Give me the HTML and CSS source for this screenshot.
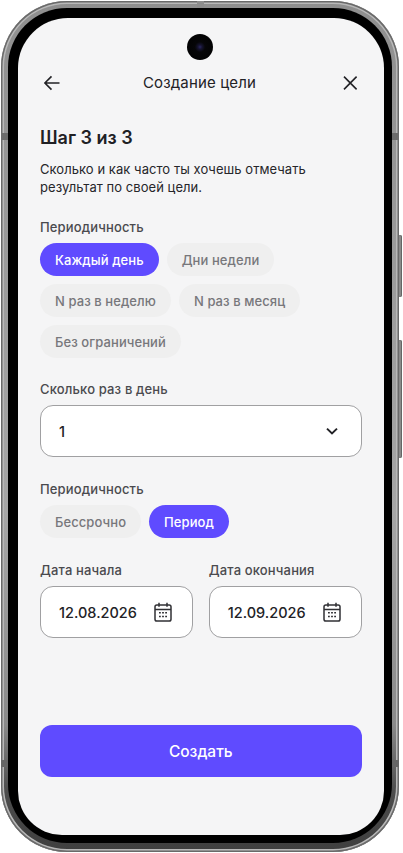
FILE: index.html
```html
<!DOCTYPE html>
<html lang="ru">
<head>
<meta charset="utf-8">
<title>Создание цели</title>
<link rel="stylesheet" href="styles.css">
</head>
<body>
<div class="phone">
  <span class="side-btn side-btn-a"></span>
  <span class="side-btn side-btn-b"></span>
  <span class="band band-top"></span>
  <span class="band band-l1"></span>
  <span class="band band-r1"></span>
  <span class="band band-l2"></span>
  <span class="band band-r2"></span>
  <div class="bezel">
    <div class="screen">
      <span class="camera"></span>
      <header class="topbar">
        <svg class="icon" viewBox="0 0 20 20" aria-hidden="true"><path d="M17.5 10H3M9.5 3.4 2.9 10l6.6 6.6"/></svg>
        <h1 class="title">Создание цели</h1>
        <svg class="icon" viewBox="0 0 20 20" aria-hidden="true"><path d="M4 3.6l12.6 12.8M16.6 3.6 4 16.4"/></svg>
      </header>
      <main class="content">
        <h2 class="step">Шаг 3 из 3</h2>
        <p class="lead">Сколько и как часто ты хочешь отмечать результат по своей цели.</p>

        <div class="label label-first">Периодичность</div>
        <div class="chips">
          <span class="chip chip-on">Каждый день</span>
          <span class="chip">Дни недели</span>
          <span class="chip">N раз в неделю</span>
          <span class="chip">N раз в месяц</span>
          <span class="chip">Без ограничений</span>
        </div>

        <div class="label label-count">Сколько раз в день</div>
        <div class="field field-select">
          <span>1</span>
          <svg class="chev" viewBox="0 0 14 10" aria-hidden="true"><path d="M2 2.6 7 7.4l5-4.8"/></svg>
        </div>

        <div class="label label-period">Периодичность</div>
        <div class="chips">
          <span class="chip">Бессрочно</span>
          <span class="chip chip-on">Период</span>
        </div>

        <div class="dates">
          <div class="date-col">
            <div class="label label-date">Дата начала</div>
            <div class="field field-date">
              <span>12.08.2026</span>
              <svg class="cal" viewBox="0 0 18 20" aria-hidden="true"><rect x="1" y="3" width="16" height="16" rx="1.8"/><path d="M1 7.4h16M5 .8v4M13 .8v4"/><path class="dots" d="M5 10.8h1.8M8.1 10.8h1.8M11.2 10.8H13M5 14.6h1.8M8.1 14.6h1.8M11.2 14.6H13"/></svg>
            </div>
          </div>
          <div class="date-col">
            <div class="label label-date">Дата окончания</div>
            <div class="field field-date">
              <span>12.09.2026</span>
              <svg class="cal" viewBox="0 0 18 20" aria-hidden="true"><rect x="1" y="3" width="16" height="16" rx="1.8"/><path d="M1 7.4h16M5 .8v4M13 .8v4"/><path class="dots" d="M5 10.8h1.8M8.1 10.8h1.8M11.2 10.8H13M5 14.6h1.8M8.1 14.6h1.8M11.2 14.6H13"/></svg>
            </div>
          </div>
        </div>

        <button class="create" type="button">Создать</button>
      </main>
    </div>
  </div>
</div>
</body>
</html>
```
FILE: styles.css
```css
* { box-sizing: border-box; }
html, body { margin: 0; padding: 0; background: #fff; }
body { width: 403px; height: 853px; overflow: hidden; font-family: Inter, "Noto Sans", sans-serif; color: #222226; }

.phone {
  position: relative;
  width: 398px;
  height: 851px;
  margin: 1px 0 0 1px;
  padding: 7px 7px 9px 7px;
  border-radius: 66px;
  background: linear-gradient(180deg, #8f8f8f 0%, #a6a6a6 60%, #8a8a8a 85%, #4d4d4d 93%, #3f3f3f 100%);
  box-shadow: inset 0 0 0 1.5px #6a6a6a, inset 0 0 0 3px #b8b8b8;
}
.bezel {
  height: 100%;
  padding: 10px 8px 8px 10px;
  border-radius: 59px;
  background: #000;
}
.screen {
  position: relative;
  height: 100%;
  border-radius: 50px 50px 44px 44px;
  background: #f5f5f6;
  overflow: hidden;
}
.side-btn { position: absolute; right: -3px; width: 3px; background: #8a8a8a; border-radius: 0 2px 2px 0; box-shadow: inset -1px 0 0 #666; }
.side-btn-a { top: 234px; height: 62px; }
.side-btn-b { top: 339px; height: 118px; }
.band { position: absolute; background: #6c6c6c; }
.band-top { top: 0; left: 196px; width: 7px; height: 7px; background: #8d8d8d; }
.band-l1, .band-r1 { top: 132px; width: 7px; height: 7px; }
.band-l2, .band-r2 { top: 759px; width: 7px; height: 7px; background: #666; }
.band-l1, .band-l2 { left: 0; }
.band-r1, .band-r2 { right: 0; }

.camera {
  position: absolute;
  top: 16px;
  left: 169px;
  width: 26px;
  height: 26px;
  border-radius: 50%;
  background: radial-gradient(circle at 50% 50%, #2a2660 0, #15132e 12%, #060608 28%, #000 100%);
}
.topbar {
  display: flex;
  align-items: center;
  justify-content: space-between;
  padding: 55px 24px 0 24px;
}
.icon { width: 20px; height: 20px; fill: none; stroke: #222226; stroke-width: 1.6; }
.title { margin: 0 3px 0 0; font-size: 15px; line-height: 20px; font-weight: 400; letter-spacing: .15px; }

.content { padding: 0 22.5px 0 22px; }
.step { margin: 33px 0 0; font-size: 18px; line-height: 24px; font-weight: 600; color: #202024; }
.lead { margin: 10px 0 0; font-size: 13px; line-height: 18px; font-weight: 400; color: #26262a; letter-spacing: .05px; }
.label { font-size: 13px; line-height: 18px; font-weight: 500; color: #4a4a4e; letter-spacing: .15px; }
.label-first { margin-top: 22px; }
.label-count { margin-top: 22px; }
.label-period { margin-top: 23px; }
.label-date { margin-bottom: 7px; }

.chips { display: flex; flex-wrap: wrap; gap: 8px; margin-top: 7px; }
.chip {
  height: 33px;
  padding: 0 15px;
  border-radius: 16.5px;
  background: #efefef;
  color: #77777b;
  font-size: 13px;
  line-height: 34px;
  font-weight: 500;
  letter-spacing: .08px;
}
.chip-on { background: #5f4bff; color: #fff; }

.field {
  display: flex;
  align-items: center;
  justify-content: space-between;
  height: 52px;
  border: 1px solid #a0a0a2;
  border-radius: 13px;
  background: #fff;
  color: #222226;
  font-size: 14.5px;
  font-weight: 500;
}
.field-select { margin-top: 7px; padding: 0 22px 0 18px; }
.chev { width: 14px; height: 10px; fill: none; stroke: #222226; stroke-width: 2; }
.field-date { padding: 0 20px 0 18px; }
.cal { width: 18px; height: 20px; flex: none; fill: none; stroke: #303034; stroke-width: 1.5; }
.cal .dots { stroke-width: 1.5; }

.dates { display: flex; gap: 16px; margin-top: 23px; }
.date-col { flex: 1 1 0; min-width: 0; }

.create {
  display: block;
  width: 100%;
  height: 52px;
  margin-top: 87px;
  padding: 1px 0 0;
  border: 0;
  border-radius: 12px;
  background: #5f4bff;
  color: #fff;
  font-family: inherit;
  font-size: 15.5px;
  font-weight: 500;
}
```
